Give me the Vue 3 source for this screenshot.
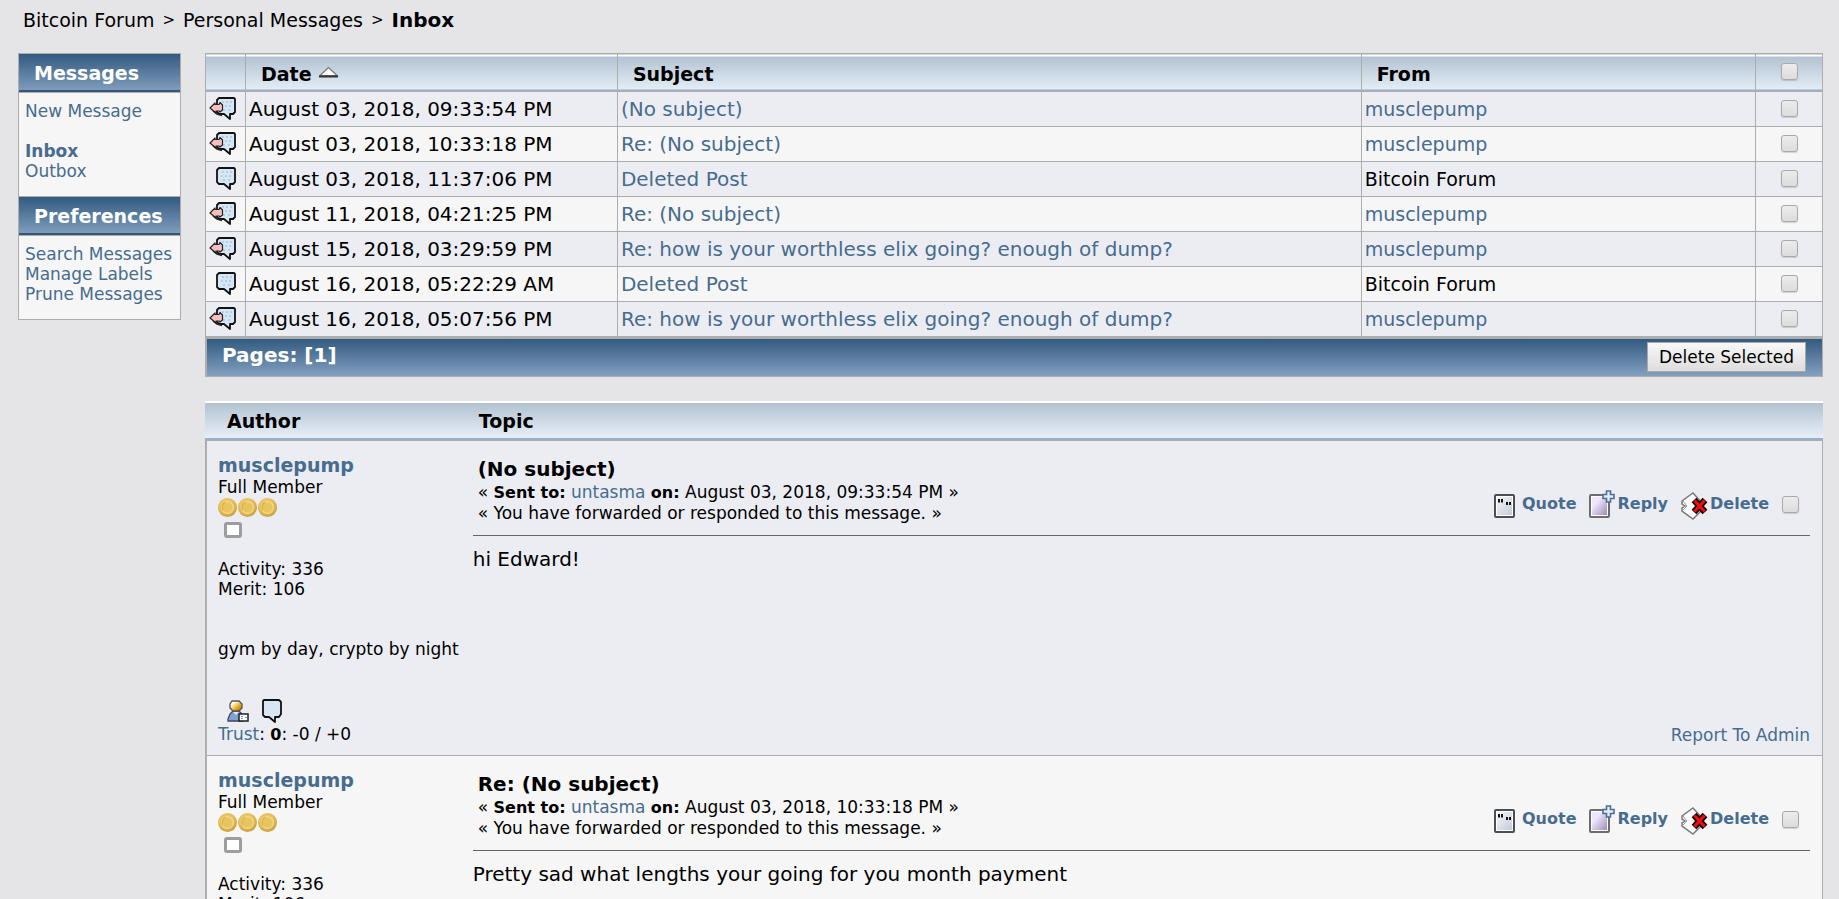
<script setup>
import { ref, watch } from 'vue'

const messages = [
  { date: 'August 03, 2018, 09:33:54 PM', subject: '(No subject)', from: 'musclepump', replied: true },
  { date: 'August 03, 2018, 10:33:18 PM', subject: 'Re: (No subject)', from: 'musclepump', replied: true },
  { date: 'August 03, 2018, 11:37:06 PM', subject: 'Deleted Post', from: 'Bitcoin Forum', replied: false },
  { date: 'August 11, 2018, 04:21:25 PM', subject: 'Re: (No subject)', from: 'musclepump', replied: true },
  { date: 'August 15, 2018, 03:29:59 PM', subject: 'Re: how is your worthless elix going? enough of dump?', from: 'musclepump', replied: true },
  { date: 'August 16, 2018, 05:22:29 AM', subject: 'Deleted Post', from: 'Bitcoin Forum', replied: false },
  { date: 'August 16, 2018, 05:07:56 PM', subject: 'Re: how is your worthless elix going? enough of dump?', from: 'musclepump', replied: true },
]

const posts = [
  { subject: '(No subject)', date: 'August 03, 2018, 09:33:54 PM', body: 'hi Edward!' },
  { subject: 'Re: (No subject)', date: 'August 03, 2018, 10:33:18 PM', body: 'Pretty sad what lengths your going for you month payment' },
]

const all = ref(false)
const selected = ref(messages.map(() => false))
const picked = ref(posts.map(() => false))

watch(all, (value) => {
  selected.value = messages.map(() => value)
})
</script>

<template>
  <div class="page">
    <svg class="defs" aria-hidden="true">
      <defs>
        <linearGradient id="page-fill" x1="0" y1="0" x2="1" y2="1">
          <stop offset="0" stop-color="#f6f6f8" /><stop offset="1" stop-color="#c3cadb" />
        </linearGradient>
        <linearGradient id="lilac-fill" x1="0" y1="0" x2="1" y2="1">
          <stop offset="0.3" stop-color="#efe6ff" /><stop offset="1" stop-color="#9c8fb4" />
        </linearGradient>
        <radialGradient id="coin-fill" cx="0.45" cy="0.4" r="0.6">
          <stop offset="0" stop-color="#f0cf72" /><stop offset="0.6" stop-color="#e9c35c" /><stop offset="1" stop-color="#c79d3e" />
        </radialGradient>
        <linearGradient id="head-fill" x1="0" y1="0" x2="1" y2="1">
          <stop offset="0.25" stop-color="#fffbe8" /><stop offset="0.6" stop-color="#e9ae22" /><stop offset="1" stop-color="#9a6a08" />
        </linearGradient>
        <symbol id="bubble" viewBox="0 0 27 24">
          <path d="M10 1H25L26 2V15L24 17H21V22L15 17H10L8 15V3Z" fill="#d6e6f3" stroke="#111" stroke-width="1.800" stroke-linejoin="round" />
          <path d="M13 5h2M17 5h2M21 5h2M12 9h2M16 9h2M20 9h2M14 13h2M19 13h2" stroke="#a3c8ea" stroke-width="1.600" />
        </symbol>
        <symbol id="arrow" viewBox="0 0 27 24">
          <path d="M1 11L6 6V7.500H10L11 5.500L13.500 8V13L11 15L10 14H7V16Z" fill="#f9bfbf" stroke="#222" stroke-width="1.200" stroke-linejoin="round" />
          <path d="M4 14L8 17L13 18.500" fill="none" stroke="#222" stroke-width="1.500" />
        </symbol>
      </defs>
    </svg>

    <nav class="crumbs" aria-label="Breadcrumb">
      <a href="#">Bitcoin Forum</a><span class="sep">&gt;</span><a href="#">Personal Messages</a><span class="sep">&gt;</span><a href="#" class="here">Inbox</a>
    </nav>

    <div class="columns">
      <aside class="sidebar">
        <h2 class="side-title">Messages</h2>
        <ul class="side-list">
          <li class="spaced"><a href="#">New Message</a></li>
          <li><a href="#" class="strong">Inbox</a></li>
          <li><a href="#">Outbox</a></li>
        </ul>
        <h2 class="side-title second">Preferences</h2>
        <ul class="side-list">
          <li><a href="#">Search Messages</a></li>
          <li><a href="#">Manage Labels</a></li>
          <li><a href="#">Prune Messages</a></li>
        </ul>
      </aside>

      <main class="main">
        <table class="inbox">
          <colgroup>
            <col class="c-icon"><col class="c-date"><col class="c-subject"><col class="c-from"><col class="c-check">
          </colgroup>
          <thead>
            <tr>
              <th aria-label="Status"></th>
              <th>
                <a href="#" class="sort">Date
                  <svg class="sort-icon" viewBox="0 0 19 12" aria-hidden="true"><path d="M1 9.500L9.500 1.500L18 9.500Z" fill="#fff" stroke="#777" stroke-width="1.200" /><path d="M0 10.500H19" stroke="#333" stroke-width="2" /></svg>
                </a>
              </th>
              <th><a href="#">Subject</a></th>
              <th><a href="#">From</a></th>
              <th class="check"><input v-model="all" type="checkbox" aria-label="Select all messages"></th>
            </tr>
          </thead>
          <tbody>
            <tr v-for="(m, i) in messages" :key="i">
              <td class="icon-cell">
                <svg class="msg-icon" aria-hidden="true"><use href="#bubble" /><use v-if="m.replied" href="#arrow" /></svg>
              </td>
              <td class="wide">{{ m.date }}</td>
              <td class="wide"><a href="#" class="link">{{ m.subject }}</a></td>
              <td>
                <a v-if="m.from === 'musclepump'" href="#" class="link">{{ m.from }}</a>
                <template v-else>{{ m.from }}</template>
              </td>
              <td class="check"><input v-model="selected[i]" type="checkbox" :aria-label="'Select message of ' + m.date"></td>
            </tr>
          </tbody>
        </table>

        <div class="pages">
          <span class="pages-text">Pages: [1]</span>
          <button type="button" class="delete-selected">Delete Selected</button>
        </div>

        <div class="topic-head">
          <span class="author-col">Author</span>
          <span>Topic</span>
        </div>

        <article v-for="(p, i) in posts" :key="i" class="post">
          <div class="poster">
            <a href="#" class="poster-name">musclepump</a>
            <span>Full Member</span>
            <span class="coins" aria-hidden="true">
              <svg v-for="n in 3" :key="n" class="coin" viewBox="0 0 18 18">
                <circle cx="9" cy="9" r="9" fill="url(#coin-fill)" />
                <circle cx="9" cy="9" r="5.500" fill="#e8c45f" stroke="#f3d988" stroke-width="1.200" />
                <path d="M4.500 11.500A5.500 5.500 0 0 1 7 4" fill="none" stroke="#d2aa49" stroke-width="1" />
              </svg>
            </span>
            <span class="status" aria-hidden="true"></span>
            <span>Activity: 336</span>
            <span>Merit: 106</span>
            <span class="motto">gym by day, crypto by night</span>
            <span class="contact">
              <a href="#" aria-label="View profile">
                <svg class="person" viewBox="0 0 22 24" aria-hidden="true">
                  <path d="M1 20L3 15L6 12H12L16 16V22H1Z" fill="#7fa3d0" stroke="#3d4a5c" stroke-width="1.300" />
                  <path d="M6 13L9 16L12 13Z" fill="#dbe8f7" />
                  <path d="M5 2H12L15 5V9L12 12H6L3 9V5Z" fill="url(#head-fill)" stroke="#555" stroke-width="1.300" />
                  <rect x="12" y="15" width="9" height="7" fill="#fff" stroke="#222" stroke-width="1.500" />
                  <path d="M14 17.500h2M14 19.500h2M18 18.500h2" stroke="#6a9cc4" stroke-width="1.200" />
                </svg>
              </a>
              <a href="#" aria-label="Personal message">
                <svg class="talk" viewBox="0 0 22 24" aria-hidden="true">
                  <path d="M3 1H18L20 3V15L18 18H14V23L8 18H4L2 16V2Z" fill="#d8e6f3" stroke="#111" stroke-width="1.800" stroke-linejoin="round" />
                </svg>
              </a>
            </span>
            <span><a href="#" class="link">Trust</a>: <b>0</b>: -0 / +0</span>
          </div>

          <div class="content">
            <header class="post-head">
              <div>
                <h3 class="post-subject">{{ p.subject }}</h3>
                <div>« <b>Sent to:</b> <a href="#" class="link">untasma</a> <b>on:</b> {{ p.date }} »</div>
                <div>« You have forwarded or responded to this message. »</div>
              </div>
              <div class="actions">
                <a href="#" class="action">
                  <svg class="quote-icon" viewBox="0 0 21 24" aria-hidden="true">
                    <rect x="1" y="1" width="19" height="22" rx="1" fill="#fff" stroke="#4c4f55" stroke-width="2" />
                    <rect x="3" y="3" width="15" height="18" fill="url(#page-fill)" />
                    <path d="M5 5V8.500M8 5V8.500M13 8V11M16 8V11" stroke="#111" stroke-width="2" />
                  </svg>Quote
                </a>
                <a href="#" class="action">
                  <svg class="reply-icon" viewBox="0 0 26 28" aria-hidden="true">
                    <rect x="1" y="5" width="19" height="22" rx="1" fill="#fff" stroke="#6d6d70" stroke-width="2" />
                    <rect x="3" y="7" width="15" height="18" fill="url(#lilac-fill)" />
                    <path d="M17.500 1H21.500V4.500H25V8.500H21.500V12H17.500V8.500H14V4.500H17.500Z" fill="#e4ebf2" stroke="#4a7196" stroke-width="1.600" />
                  </svg>Reply
                </a>
                <a href="#" class="action">
                  <svg class="delete-icon" viewBox="0 0 27 28" aria-hidden="true">
                    <path d="M1 9L12 1L22 12V17L12 27L1 19V16L4 14L1 12Z" fill="#fff" stroke="#77777a" stroke-width="1.500" />
                    <path d="M2 9L6 14L2 18" fill="none" stroke="#99999c" stroke-width="1" />
                    <path d="M13 8L24 20M24 8L13 20" stroke="#140000" stroke-width="6.500" />
                    <path d="M13.500 8.500L23.500 19.500M23.500 8.500L13.500 19.500" stroke="#f50d0d" stroke-width="3" />
                  </svg>Delete
                </a>
                <input v-model="picked[i]" type="checkbox" :aria-label="'Select message ' + p.subject">
              </div>
            </header>
            <p class="body">{{ p.body }}</p>
            <a href="#" class="link report">Report To Admin</a>
          </div>
        </article>
      </main>
    </div>
  </div>
</template>

<style>
body {
  margin: 0;
  background: #e5e5e7;
}
html {
  overflow: hidden;
}
</style>

<style scoped>
.page {
  padding: 8px 16px 0 18px;
  height: 100vh;
  box-sizing: border-box;
  overflow: hidden;
  font-family: "DejaVu Sans", Verdana, sans-serif;
  font-size: 17px;
  line-height: 20px;
  color: #000;
}
.defs {
  position: absolute;
  width: 0;
  height: 0;
}
a {
  color: inherit;
  text-decoration: none;
}
b {
  font-size: 16px;
}
.link {
  color: #476c8e;
}
.crumbs {
  display: flex;
  align-items: center;
  padding-left: 5px;
  font-size: 19px;
  line-height: 24px;
}
.sep {
  margin: 0 8px;
  font-size: 15px;
}
.here {
  font-size: 20px;
  font-weight: bold;
}
.columns {
  display: flex;
  align-items: flex-start;
  gap: 24px;
  margin-top: 21px;
}
.sidebar {
  flex: none;
  width: 161px;
  border: 1px solid #adadad;
  background: #f6f6f6;
}
.side-title {
  margin: 0;
  padding: 6px 15px;
  border-bottom: 1px solid #adadad;
  box-shadow: inset 0 -2px #375576;
  background: linear-gradient(#325a80, #83a0bf);
  color: #fff;
  font-size: 19px;
  line-height: 26px;
}
.second {
  border-top: 1px solid #adadad;
}
.side-list {
  margin: 0;
  padding: 8px 6px 15px;
  list-style: none;
  color: #476c8e;
  white-space: nowrap;
}
.spaced {
  margin-bottom: 20px;
}
.strong {
  font-weight: bold;
}
.main {
  flex: 1;
  min-width: 0;
}
.inbox {
  width: 100%;
  table-layout: fixed;
  border-collapse: collapse;
  font-size: 19px;
  line-height: 24px;
}
.c-icon { width: 40px; }
.c-date { width: 23%; }
.c-subject { width: 46%; }
.c-check { width: 67px; }
.inbox th,
.inbox td {
  height: 35px;
  box-sizing: border-box;
  padding: 0 3px;
  border: 1px solid #adadad;
  text-align: left;
}
.inbox .wide {
  font-size: 20px;
}
.inbox th {
  height: 38px;
  padding: 4px 15px 2px;
  background: linear-gradient(#fff 2px, #b3c2d1 2px, #e3edf5 35px, #9bafc4 35px);
}
.inbox tbody tr:nth-child(odd) { background: #ecedf3; }
.inbox tbody tr:nth-child(even) { background: #f6f6f6; }
.inbox .check {
  padding: 0 0 2px;
}
.check input {
  display: block;
  margin: 0 auto;
}
.sort {
  display: flex;
  align-items: center;
  gap: 7px;
}
.sort-icon {
  width: 19px;
  height: 12px;
  margin-bottom: 4px;
}
.msg-icon {
  display: block;
  width: 27px;
  height: 24px;
}
input[type="checkbox"] {
  appearance: none;
  width: 17px;
  height: 17px;
  margin: 0;
  border: 1px solid #a9a9a9;
  border-radius: 3px;
  background: linear-gradient(#ececec, #dcdcdc);
  box-shadow: 0 1px 1px rgba(0, 0, 0, 0.15);
}
.check input[type="checkbox"] {
  margin: 0 auto;
}
input[type="checkbox"]:checked {
  background: #476c8e;
}
.pages {
  display: flex;
  justify-content: space-between;
  align-items: flex-start;
  border: 1px solid #adadad;
  border-width: 2px 1px 1px 2px;
  padding: 3px 16px 4px 15px;
  background: linear-gradient(#325a80, #83a0bf) padding-box;
  color: #fff;
  font-size: 20px;
  font-weight: bold;
}
.pages-text {
  line-height: 26px;
}
.delete-selected {
  height: 30px;
  padding: 0 11px;
  border: 1px solid #a9a9a9;
  background: linear-gradient(#f8f8f8, #dddddd);
  color: #000;
  font-family: inherit;
  font-size: 17px;
}
.topic-head {
  display: flex;
  margin-top: 24px;
  padding: 8px 22px 7px;
  background: linear-gradient(#fff 2px, #b3c2d1 2px, #e6eff7 37px, #9bafc4 37px);
  font-size: 19px;
  font-weight: bold;
  line-height: 24px;
}
.author-col {
  width: 16%;
}
.post {
  display: flex;
  padding: 12px 12px 10px 11px;
  border: 1px solid #adadad;
  border-left-width: 2px;
  border-bottom: 0;
  background: #ecedf3;
}
.post:nth-of-type(even) {
  background: #f6f6f6;
}
.poster {
  display: flex;
  flex: none;
  flex-direction: column;
  width: 16%;
}
.poster-name {
  color: #476c8e;
  font-size: 19px;
  font-weight: bold;
  line-height: 24px;
}
.coins {
  display: flex;
  gap: 1px;
  height: 20px;
  align-items: center;
}
.coin {
  width: 19px;
  height: 19px;
}
.status {
  width: 12px;
  height: 10px;
  margin: 5px 0 21px 6px;
  border: 3px solid #9d9d9d;
  border-radius: 3px;
  background: #fff;
}
.motto {
  margin: 40px 0;
}
.contact {
  display: flex;
  gap: 12px;
  height: 25px;
  padding-left: 9px;
}
.person,
.talk {
  display: block;
  width: 22px;
  height: 24px;
}
.content {
  display: flex;
  flex: 1;
  flex-direction: column;
  min-width: 0;
}
.post-head {
  display: flex;
  justify-content: space-between;
  align-items: center;
  padding: 4px 11px 12px 5px;
  border-bottom: 1px solid #666;
}
.post-subject {
  margin: 0;
  font-size: 20px;
  line-height: 25px;
}
.actions {
  display: flex;
  align-items: center;
  gap: 13px;
  margin-top: 28px;
  color: #476c8e;
  font-size: 16px;
  font-weight: bold;
}
.action {
  display: flex;
  align-items: center;
}
.quote-icon {
  width: 21px;
  height: 24px;
  margin: 4px 7px 0 0;
}
.reply-icon {
  width: 26px;
  height: 28px;
  margin-right: 2px;
}
.delete-icon {
  width: 27px;
  height: 28px;
  margin: 4px 2px 0 0;
}
.body {
  margin: 11px 0 0;
  font-size: 20px;
  line-height: 24px;
}
.report {
  margin-top: auto;
  align-self: flex-end;
}
</style>
